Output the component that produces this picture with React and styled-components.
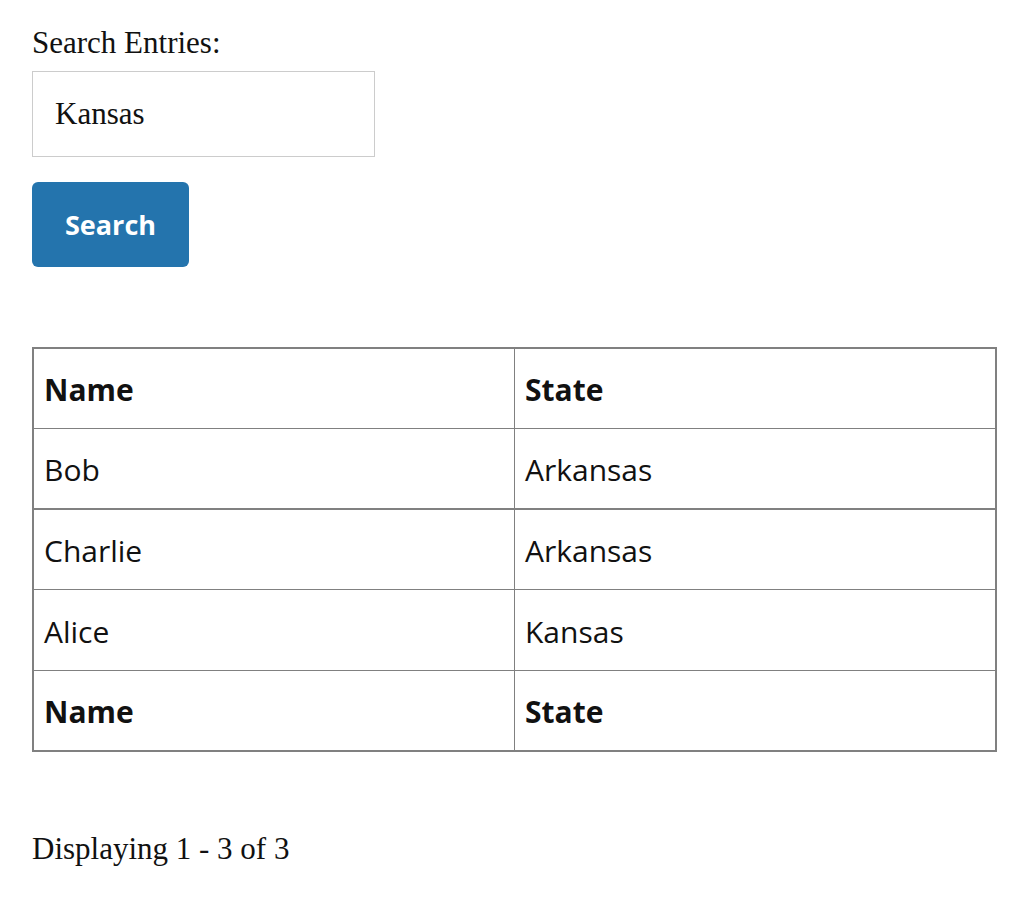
import React from "react";
import styled, { createGlobalStyle } from "styled-components";

const Global = createGlobalStyle`
  body {
    margin: 0;
    background: #fff;
    color: #111;
    font-family: "Liberation Serif", serif;
  }
`;

const Page = styled.main`
  padding: 24px 30px 32px 32px;
`;

const Label = styled.label`
  display: block;
  font-size: 31px;
  line-height: 38px;
  margin-bottom: 9px;
`;

const SearchInput = styled.input`
  display: block;
  box-sizing: border-box;
  width: 343px;
  height: 86px;
  padding: 0 22px;
  border: 1px solid #cccccc;
  font-family: "Liberation Serif", serif;
  font-size: 31px;
  color: #111;
  outline: none;
`;

const SearchButton = styled.button`
  display: block;
  margin-top: 25px;
  width: 157px;
  height: 85px;
  border: none;
  border-radius: 6px;
  background: #2474ad;
  color: #fff;
  font-family: "Open Sans", sans-serif;
  font-weight: 700;
  font-size: 27px;
  cursor: pointer;
`;

const Table = styled.table`
  margin-top: 80px;
  width: 965px;
  border-collapse: collapse;
  border: 2px solid #808080;
  font-family: "Open Sans", sans-serif;
  font-size: 30px;
  table-layout: fixed;
`;

const Row = styled.tr`
  border-bottom: ${(p) => (p.$thick ? "2px" : "1px")} solid #808080;
`;

const Cell = styled.td`
  border: 1px solid #808080;
  padding: 2px 10px 0;
  height: ${(p) => (p.$tall ? 78 : 77)}px;
  text-align: left;
  font-weight: ${(p) => (p.$head ? 700 : 400)};
  color: #111;
`;

const Footer = styled.p`
  margin: 78px 0 0;
  font-size: 31px;
  line-height: 38px;
`;

const rows = [
  { name: "Bob", state: "Arkansas" },
  { name: "Charlie", state: "Arkansas" },
  { name: "Alice", state: "Kansas" },
];

export default function App() {
  return (
    <Page>
      <Global />
      <Label htmlFor="search">Search Entries:</Label>
      <SearchInput id="search" defaultValue="Kansas" />
      <SearchButton>Search</SearchButton>
      <Table>
        <thead>
          <Row>
            <Cell as="th" $head>Name</Cell>
            <Cell as="th" $head>State</Cell>
          </Row>
        </thead>
        <tbody>
          {rows.map((r, i) => (
            <Row key={r.name} $thick={i === 0}>
              <Cell>{r.name}</Cell>
              <Cell $tall={i === 2}>{r.state}</Cell>
            </Row>
          ))}
        </tbody>
        <tfoot>
          <Row>
            <Cell as="th" $head>Name</Cell>
            <Cell as="th" $head>State</Cell>
          </Row>
        </tfoot>
      </Table>
      <Footer>Displaying 1 - 3 of 3</Footer>
    </Page>
  );
}
